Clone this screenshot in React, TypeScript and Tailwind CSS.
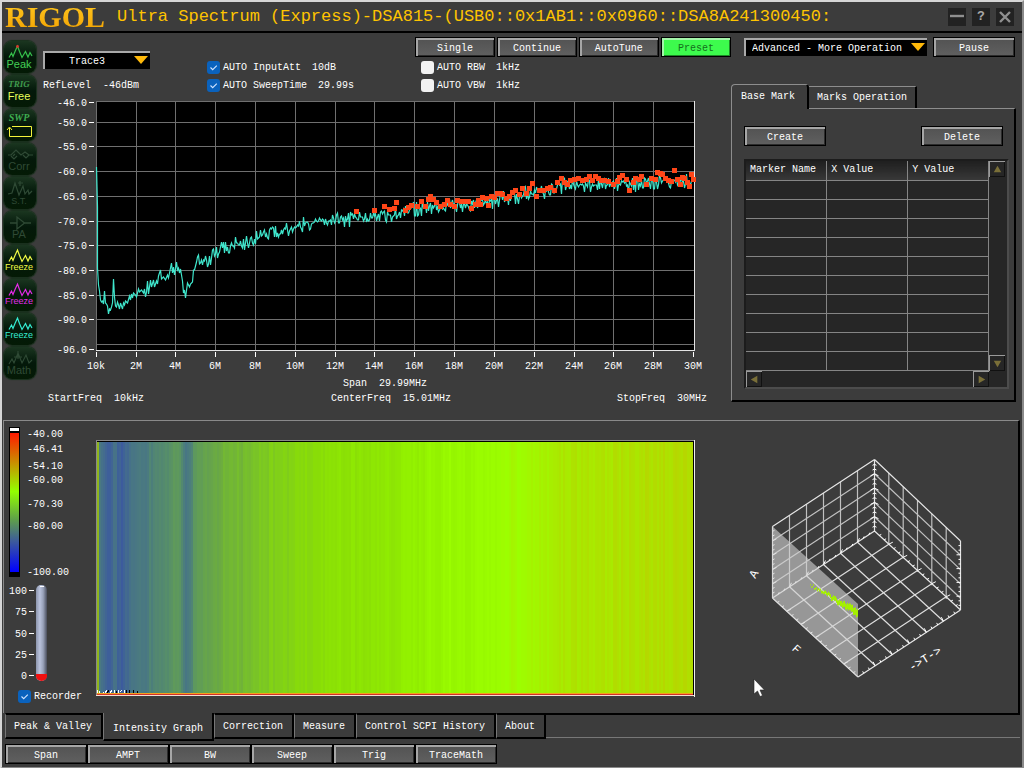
import { useState } from 'react';
import type { ReactNode } from 'react';
import clsx from 'clsx';

type Point = [number, number];

const mono = '"Liberation Mono", monospace';

// low end of the trace, followed by the slow rise up to 30M
const TRACE_START: Point[] = [
  [96, 167], [97, 207], [97, 268], [98, 285], [99, 291], [100, 300], [101, 302], [102, 301], [103, 304], [104, 291],
  [105, 303], [106, 304], [107, 306], [108, 314], [109, 309], [110, 310], [111, 307], [112, 303], [113, 279], [114, 297],
  [115, 306], [116, 307], [117, 302], [118, 305], [119, 309], [120, 303], [122, 309], [123, 303], [124, 305], [125, 301],
  [127, 303], [129, 296], [130, 300], [131, 294], [132, 298], [133, 293], [135, 295], [136, 297], [138, 289], [139, 292],
  [141, 290], [143, 293], [144, 289], [145, 297], [146, 292], [147, 281], [148, 294], [150, 280], [151, 287], [153, 280],
  [154, 287], [156, 281], [157, 284], [158, 276], [160, 270], [161, 279], [163, 277], [165, 280], [167, 275], [168, 278],
  [170, 268], [171, 263], [172, 273], [173, 267], [174, 275], [176, 262], [177, 270], [178, 268], [179, 273], [180, 269],
  [182, 281], [183, 293], [184, 290], [185, 298], [187, 283], [189, 287], [190, 284], [192, 282], [193, 270],
];

const BASELINE: Point[] = [
  [194, 270], [196, 262], [205, 260], [215, 256], [222, 248], [240, 244], [255, 239], [270, 233], [290, 229], [310, 222],
  [340, 219], [374, 218], [400, 212], [430, 206], [460, 205], [480, 203], [500, 199], [520, 196], [550, 190], [565, 185],
  [610, 185], [650, 183], [694, 182],
];

const MARKS: Point[] = [
  [356, 211], [374, 210], [384, 206], [389, 209], [394, 208], [396, 202], [405, 210], [408, 207], [411, 205], [417, 206],
  [421, 201], [425, 206], [428, 199], [430, 196], [433, 199], [436, 202], [440, 206], [444, 204], [447, 200], [450, 204],
  [454, 206], [457, 200], [461, 201], [465, 201], [468, 201], [471, 208], [475, 204], [478, 200], [480, 204], [482, 197],
  [486, 198], [488, 205], [491, 196], [494, 197], [497, 193], [500, 193], [502, 194], [506, 198], [509, 196], [512, 192],
  [515, 190], [519, 194], [522, 188], [526, 193], [529, 188], [532, 183], [536, 196], [539, 190], [543, 190], [547, 188],
  [550, 187], [554, 190], [557, 182], [561, 178], [564, 182], [567, 184], [570, 180], [574, 179], [578, 178], [582, 180],
  [586, 179], [589, 176], [592, 180], [595, 176], [598, 178], [601, 180], [604, 180], [608, 181], [613, 184], [617, 181],
  [619, 177], [622, 175], [626, 179], [629, 190], [633, 182], [635, 178], [639, 179], [641, 176], [646, 184], [651, 178],
  [655, 179], [657, 172], [660, 173], [662, 174], [665, 178], [668, 180], [671, 181], [674, 170], [677, 179], [680, 184],
  [682, 177], [684, 178], [687, 182], [689, 186], [691, 174], [693, 179],
];

const HEAT: [number, number, number, number][] = [
  [176, 184, 212, 0], [182, 172, 228, 0], [190, 164, 244, 0], [198, 156, 255, 0], [208, 146, 240, 0], [220, 138, 222, 6],
  [234, 124, 200, 34], [250, 108, 172, 64], [268, 92, 150, 96], [284, 76, 126, 124], [296, 70, 112, 138], [310, 58, 88, 160],
];

function lerpAt(points: Point[], x: number) {
  const i = points.findIndex((p) => p[0] > x);
  if (i === -1) return points[points.length - 1][1];
  if (i === 0) return points[0][1];
  const [x0, y0] = points[i - 1];
  const [x1, y1] = points[i];
  return y0 + ((y1 - y0) * (x - x0)) / (x1 - x0);
}

function noise(n: number) {
  const v = Math.sin(n * 12.9898) * 43758.5453;
  return (v - Math.floor(v)) * 2 - 1;
}

function heatColor(y: number) {
  const i = HEAT.findIndex((s) => s[0] > y);
  if (i === 0) return `rgb(${HEAT[0].slice(1).join(',')})`;
  if (i === -1) return `rgb(${HEAT[HEAT.length - 1].slice(1).join(',')})`;
  const a = HEAT[i - 1];
  const b = HEAT[i];
  const t = (y - a[0]) / (b[0] - a[0]);
  return `rgb(${[1, 2, 3].map((c) => Math.round(a[c] + (b[c] - a[c]) * t)).join(',')})`;
}

const trace: Point[] = [...TRACE_START];
for (let x = 194; x <= 693; x++) {
  const n = noise(x * 7 + 3);
  trace.push([x, Math.round(lerpAt(BASELINE, x) + n * (2 + Math.abs(n) * 6))]);
}

const columns = Array.from({ length: 298 }, (_, i) => {
  const x = 97 + i * 2;
  if (i === 0) return { x, fill: '#8fb41c' };
  const avg = (lerpAt(trace, x - 2) + lerpAt(trace, x) + lerpAt(trace, x + 1) + lerpAt(trace, x + 3)) / 4;
  const base = x < 194 ? avg : lerpAt(BASELINE, x) * 0.5 + avg * 0.5;
  return { x, fill: heatColor(base - 2 + noise(i * 3) * 3) };
});

const Y_TICKS: [number, string][] = [
  [102, '-46.0'], [122, '-50.0'], [146, '-55.0'], [171, '-60.0'], [196, '-65.0'], [221, '-70.0'], [245, '-75.0'],
  [270, '-80.0'], [295, '-85.0'], [319, '-90.0'], [349, '-96.0'],
];
const X_TICKS: [number, string][] = [
  [96, '10k'], [136, '2M'], [175, '4M'], [215, '6M'], [255, '8M'], [295, '10M'], [335, '12M'], [374, '14M'],
  [414, '16M'], [454, '18M'], [494, '20M'], [534, '22M'], [574, '24M'], [613, '26M'], [653, '28M'], [693, '30M'],
];

const bevel =
  'h-5 border border-black bg-linear-to-b from-[#525252] to-[#606060] pt-1 text-center leading-3 shadow-[inset_2px_2px_0_#a6a6a6,inset_-1px_-1px_0_#2c2c2c]';

function PanelButton({ children, className }: { children: ReactNode; className?: string }) {
  return (
    <button type="button" className={clsx(bevel, className)}>
      {children}
    </button>
  );
}

function ComboBox({ label, value, className }: { label: string; value: string; className: string }) {
  return (
    <div className="relative">
      <select
        aria-label={label}
        className={clsx('block h-[18px] w-full appearance-none border-t-2 border-l-2 border-[#a9a9a9] bg-black pt-px text-white', className)}
      >
        <option>{value}</option>
      </select>
      <svg viewBox="0 0 14 8" className="pointer-events-none absolute top-[5px] right-[2px] h-2 w-3.5">
        <path d="M0 0H14L7 8Z" fill="#ffb90a" />
      </svg>
    </div>
  );
}

function CheckBox({ label, value, defaultChecked }: { label: string; value?: string; defaultChecked?: boolean }) {
  return (
    <label className="flex h-[18px] items-center gap-[3px]">
      <span className="relative flex">
        <input
          type="checkbox"
          defaultChecked={defaultChecked}
          className="peer size-[13px] appearance-none rounded-[3px] bg-[#f2f2f2] checked:bg-[#0a62bd]"
        />
        <svg viewBox="0 0 13 13" className="pointer-events-none absolute inset-0 hidden size-[13px] peer-checked:block">
          <path d="M3.5 6.5L5.7 8.7L9.8 4.6" fill="none" stroke="#cfe3ff" strokeWidth="1.1" />
        </svg>
      </span>
      <span className="pt-0.5">{label}</span>
      {value && <span className="ml-2 pt-0.5">{value}</span>}
    </label>
  );
}

function MiniTrace({ color }: { color: string }) {
  return (
    <path
      d="M5 16.5L7.5 12L9 15.5L11 10.5L13.5 5L15.5 10.5L18 16.5L21.5 10.5L24 16L26 11.5L28 15"
      fill="none"
      stroke={color}
      strokeWidth="1.2"
    />
  );
}

function IconText({ color, size = 11, y = 27, children }: { color: string; size?: number; y?: number; children: string }) {
  return (
    <text x="15" y={y} textAnchor="middle" fontSize={size} fontFamily='"Liberation Sans", sans-serif' fill={color}>
      {children}
    </text>
  );
}

const DIM = '#2f4a35';

function Freeze({ color }: { color: string }) {
  return (
    <>
      <MiniTrace color={color} />
      <IconText color={color} size={9} y={25}>Freeze</IconText>
    </>
  );
}

const TOOLS: { name: string; icon: ReactNode }[] = [
  {
    name: 'Peak',
    icon: (
      <>
        <MiniTrace color="#36c04c" />
        <circle cx="13.5" cy="5.5" r="1.4" fill="#d8382c" />
        <IconText color="#43cf55">Peak</IconText>
      </>
    ),
  },
  {
    name: 'Trigger',
    icon: (
      <>
        <text x="15" y="12" textAnchor="middle" fontSize="9" fontStyle="italic" fontWeight="bold" fontFamily='"Liberation Serif", serif' fill="#3f9a4c">
          TRIG
        </text>
        <IconText color="#eaff5a" y={25}>Free</IconText>
      </>
    ),
  },
  {
    name: 'Sweep mode',
    icon: (
      <>
        <text x="15" y="12" textAnchor="middle" fontSize="10" fontStyle="italic" fontWeight="bold" fontFamily='"Liberation Serif", serif' fill="#3fae50">
          SWP
        </text>
        <path d="M8 17.5H27.5V27.5H5.5V19M3 21L5.5 18L8 21" fill="none" stroke="#f4f43a" />
      </>
    ),
  },
  {
    name: 'Correction',
    icon: (
      <>
        <path d="M4 12H7L12 7L17 12L21 9L25 12H29M9 13L11 11M7 13L10 16L13 13M19 12L22 15L25 12" fill="none" stroke={DIM} strokeWidth="1.2" />
        <IconText color={DIM}>Corr</IconText>
      </>
    ),
  },
  {
    name: 'Signal tracking',
    icon: (
      <>
        <path d="M4 17L8 16L11 6L15 18L19 9L21 17L24 13L25 17L28 14M16 4V9M14 6H19" fill="none" stroke={DIM} strokeWidth="1.2" />
        <IconText color={DIM} size={9}>S.T.</IconText>
      </>
    ),
  },
  {
    name: 'Preamplifier',
    icon: (
      <>
        <path d="M6 12H13M20 12H27M13 6V18L20 12.5V11.5Z" fill="none" stroke={DIM} strokeWidth="1.3" />
        <IconText color={DIM}>PA</IconText>
      </>
    ),
  },
  { name: 'Freeze trace 1', icon: <Freeze color="#f1fb46" /> },
  { name: 'Freeze trace 2', icon: <Freeze color="#e32be6" /> },
  { name: 'Freeze trace 3', icon: <Freeze color="#35ecd2" /> },
  {
    name: 'Math',
    icon: (
      <>
        <path d="M5 17L8 12L10 16L14 6L18 16L22 8L25 16L28 13M10 10H18M14 4V12" fill="none" stroke={DIM} strokeWidth="1.1" />
        <IconText color={DIM}>Math</IconText>
      </>
    ),
  },
];

function SideBar() {
  return (
    <nav className="flex w-[41px] shrink-0 flex-col gap-0.5 pt-2 pl-0.5">
      {TOOLS.map((tool) => (
        <button
          key={tool.name}
          type="button"
          aria-label={tool.name}
          className="size-8 rounded-lg bg-linear-to-b from-[#1b3620] via-[#04180a] to-[#041a05] shadow-[0_0_1px_1px_#17301b]"
        >
          <svg viewBox="0 0 32 32" className="block size-8">{tool.icon}</svg>
        </button>
      ))}
    </nav>
  );
}

function SpectrumChart() {
  return (
    <svg viewBox="43 97 688 278" className="block w-full" role="img" aria-label="Spectrum" shapeRendering="crispEdges">
      <rect x="96" y="101" width="598" height="249" fill="#000" />
      <g stroke="#6f6f6f">
        {Y_TICKS.slice(1, -1).map(([y]) => (
          <path key={y} d={`M96 ${y}.5H694`} />
        ))}
        <path d="M96 344.5H694M96 101.5H694M96.5 101V350" />
        {X_TICKS.slice(1, -1).map(([x]) => (
          <path key={x} d={`M${x}.5 101V350`} />
        ))}
      </g>
      <path d="M96 350.5H694.5V101" fill="none" stroke="#e4e4e4" />
      <polyline points={trace.map(([x, y]) => `${x}.5,${y}`).join(' ')} fill="none" stroke="#3fe6cc" strokeWidth="1.2" shapeRendering="auto" />
      {MARKS.map(([x, y]) => (
        <rect key={x} x={x - 2} y={y - 2} width="5" height="5" fill="#ff4618" />
      ))}
      <g fontSize="10" fontFamily={mono} fill="#fff">
        {Y_TICKS.map(([y, label]) => (
          <g key={label}>
            <path d={`M89 ${y}.5H94`} stroke="#fff" />
            <text x="87" y={y + 4} textAnchor="end">{label}</text>
          </g>
        ))}
        {X_TICKS.map(([x, label]) => (
          <g key={label}>
            <path d={`M${x}.5 352V357`} stroke="#fff" />
            <text x={x} y="369" textAnchor="middle">{label}</text>
          </g>
        ))}
      </g>
    </svg>
  );
}

function TracePanel() {
  return (
    <section className="min-w-0 flex-1">
      <div className="grid grid-cols-[164px_208px_1fr] pt-1">
        <div className="w-[107px] pt-3.5">
          <ComboBox label="Trace" value="Trace3" className="pl-6" />
          <p className="mt-[11px] flex gap-3 whitespace-nowrap">
            <span>RefLevel</span>
            <span>-46dBm</span>
          </p>
        </div>
        <div className="pt-[21px]">
          <CheckBox label="AUTO InputAtt" value="10dB" defaultChecked />
          <CheckBox label="AUTO SweepTime" value="29.99s" defaultChecked />
        </div>
        <div>
          <div className="flex gap-0.5">
            <PanelButton className="flex-8">Single</PanelButton>
            <PanelButton className="flex-8">Continue</PanelButton>
            <PanelButton className="flex-8">AutoTune</PanelButton>
            <button type="button" className="h-5 flex-7 border border-black bg-[#3dfb4d] pt-1 leading-3 text-[#14701c] shadow-[inset_2px_2px_0_#a4f5aa,inset_-1px_-1px_0_#1c8a26]">
              Preset
            </button>
          </div>
          <div className="pt-px pl-1.5">
            <CheckBox label="AUTO RBW" value="1kHz" />
            <CheckBox label="AUTO VBW" value="1kHz" />
          </div>
        </div>
      </div>
      <div className="mt-[3px]">
        <SpectrumChart />
      </div>
      <div className="mt-[3px] mr-6 ml-[5px] grid grid-cols-[283px_1fr_auto] gap-y-[3px]">
        <p className="col-start-2 flex gap-3 pl-3"><span>Span</span><span>29.99MHz</span></p>
        <p className="col-start-1 flex gap-3"><span>StartFreq</span><span>10kHz</span></p>
        <p className="flex gap-3"><span>CenterFreq</span><span>15.01MHz</span></p>
        <p className="flex gap-3"><span>StopFreq</span><span>30MHz</span></p>
      </div>
    </section>
  );
}

const ARROWS = { up: 'M4 11L8 4L12 11Z', down: 'M4 5L8 12L12 5Z', left: 'M11 4L4 8L11 12Z', right: 'M5 4L12 8L5 12Z' };

function ScrollButton({ dir }: { dir: keyof typeof ARROWS }) {
  return (
    <button type="button" aria-label={`Scroll ${dir}`} className="size-4 border-t border-l border-[#9a9a9a] bg-[#262626] shadow-[inset_-1px_-1px_0_#111]">
      <svg viewBox="0 0 16 16" className="block size-[15px]">
        <path d={ARROWS[dir]} fill="#7a6f38" />
      </svg>
    </button>
  );
}

function MarkerPanel() {
  const [tab, setTab] = useState('base');
  return (
    <aside className="w-[285px] shrink-0 pt-1">
      <div className="flex justify-between pl-[13px]">
        <div className="w-[183px] pt-px">
          <ComboBox label="Operation" value="Advanced - More Operation" className="pl-1.5" />
        </div>
        <PanelButton className="mr-px w-[82px]">Pause</PanelButton>
      </div>
      <div role="tablist" className="mt-[27px] flex items-end">
        <button
          type="button"
          role="tab"
          aria-selected={tab === 'base'}
          onClick={() => setTab('base')}
          className="z-10 -mb-px h-[25px] rounded-t-sm border-t border-r-2 border-l border-t-[#8d8d8d] border-r-black border-l-[#8d8d8d] bg-[#3c3c3c] pr-3 pl-[9px]"
        >
          Base Mark
        </button>
        <button
          type="button"
          role="tab"
          aria-selected={tab === 'op'}
          onClick={() => setTab('op')}
          className="h-[22px] border-t border-r-2 border-t-[#8d8d8d] border-r-black px-2"
        >
          Marks Operation
        </button>
      </div>
      <div className="border-t border-r-2 border-b-2 border-l border-t-[#8d8d8d] border-r-black border-b-black border-l-[#8d8d8d] pt-[17px] pr-[5px] pb-[11px] pl-3">
        <div className="flex justify-between pr-1.5">
          <PanelButton className="w-[82px]">Create</PanelButton>
          <PanelButton className="w-[82px]">Delete</PanelButton>
        </div>
        <div className="mt-[13px] grid grid-cols-[1fr_18px] border-2 border-t-[#1c1c1c] border-r-[#4c4c4c] border-b-[#4c4c4c] border-l-[#1c1c1c] bg-[#262626]">
          <table className="w-full table-fixed border-collapse">
            <thead>
              <tr className="h-[19px] text-left">
                {['Marker Name', 'X Value', 'Y Value'].map((head) => (
                  <th key={head} className="border-r border-b border-[#858585] bg-linear-to-b from-[#1f1f1f] to-[#383838] pl-1 font-normal whitespace-nowrap">
                    {head}
                  </th>
                ))}
              </tr>
            </thead>
            <tbody>
              {Array.from({ length: 10 }, (_, row) => (
                <tr key={row} className="h-[19px]">
                  <td className="border-r border-b border-[#858585]" />
                  <td className="border-r border-b border-[#858585]" />
                  <td className="border-r border-b border-[#858585]" />
                </tr>
              ))}
            </tbody>
          </table>
          <div className="flex flex-col justify-between">
            <ScrollButton dir="up" />
            <ScrollButton dir="down" />
          </div>
          <div className="flex h-4 justify-between">
            <ScrollButton dir="left" />
            <ScrollButton dir="right" />
          </div>
        </div>
      </div>
    </aside>
  );
}

function LevelScale() {
  const levels: [number, string][] = [
    [434, '-40.00'], [449, '-46.41'], [466, '-54.10'], [480, '-60.00'], [504, '-70.30'], [526, '-80.00'], [572, '-100.00'],
  ];
  const tank: [number, string][] = [[591, '100'], [612, '75'], [634, '50'], [655, '25'], [676, '0']];
  return (
    <svg viewBox="4 421 92 266" className="block w-full" role="img" aria-label="Level scale">
      <defs>
        <linearGradient id="level" x1="0" y1="0" x2="0" y2="1">
          <stop offset="0" stopColor="#ff1a00" />
          <stop offset="0.42" stopColor="#93ff00" />
          <stop offset="0.62" stopColor="#5fa048" />
          <stop offset="0.78" stopColor="#3c5a9c" />
          <stop offset="1" stopColor="#0000ff" />
        </linearGradient>
        <linearGradient id="glass">
          <stop offset="0" stopColor="#8d96ae" />
          <stop offset="0.35" stopColor="#b9c2dc" />
          <stop offset="0.65" stopColor="#99a2ba" />
          <stop offset="1" stopColor="#4a4e5c" />
        </linearGradient>
      </defs>
      <rect x="9" y="427" width="11" height="150" fill="#000" />
      <rect x="10" y="428" width="9" height="3" fill="#fff" />
      <rect x="10" y="433" width="9" height="139" fill="url(#level)" />
      <rect x="36" y="585" width="11" height="96" rx="5" fill="url(#glass)" />
      <path d="M36 674H47V676A5.5 5 0 0 1 36 676Z" fill="#f01010" />
      <path d="M40 586.5H44" stroke="#fff" />
      <g fontSize="10" fontFamily={mono} fill="#fff">
        {levels.map(([y, label]) => (
          <text key={label} x="27" y={y + 3}>{label}</text>
        ))}
        {tank.map(([y, label]) => (
          <g key={label}>
            <text x="27" y={y + 3} textAnchor="end">{label}</text>
            <path d={`M29 ${y - 1}.5H34`} stroke="#fff" />
          </g>
        ))}
      </g>
    </svg>
  );
}

function IntensityGraph() {
  return (
    <svg viewBox="96 440 600 258" className="block w-full" role="img" aria-label="Intensity graph" shapeRendering="crispEdges">
      <rect x="96" y="440" width="598" height="256" fill="#000" />
      {columns.map((col) => (
        <rect key={col.x} x={col.x} y="442" width="2" height="252" fill={col.fill} />
      ))}
      <path d="M96 440.5H694M96.5 440V696" stroke="#8a8a8a" fill="none" />
      <path d="M694.5 440V697" stroke="#f0f0f0" />
      <path d="M97 693.5H693" stroke="#f6a01c" />
      <path d="M97 694.5H693" stroke="#d4322a" />
      <path d="M96 695.5H694" stroke="#f3dfd0" />
      <path d="M97 693V690M99 691V693M103 693V692M105 693L107 690M110 693L112 690M114 690V693M118 690V693M120 692L122 690M124 690V693" stroke="#fff" />
      <path d="M107 693L109 690M116 693V691M126 690L127 693M129 690V693M133 690V693M137 691V693" stroke="#000" />
    </svg>
  );
}

const mix = (a: Point, b: Point, t: number): Point => [a[0] + (b[0] - a[0]) * t, a[1] + (b[1] - a[1]) * t];
const seg = (a: Point, b: Point) => `M${a[0].toFixed(1)} ${a[1].toFixed(1)}L${b[0].toFixed(1)} ${b[1].toFixed(1)}`;

// a: shared corner, b and c: ends of the two edges that leave it
function wallLines(a: Point, b: Point, c: Point, nb: number, nc: number) {
  const d: Point = [b[0] + c[0] - a[0], b[1] + c[1] - a[1]];
  const lines: string[] = [];
  for (let i = 1; i < nb; i++) lines.push(seg(mix(a, b, i / nb), mix(c, d, i / nb)));
  for (let i = 1; i < nc; i++) lines.push(seg(mix(a, c, i / nc), mix(b, d, i / nc)));
  return lines.join('');
}

function edgeTicks(a: Point, b: Point, dx: number, dy: number, count = 18) {
  return Array.from({ length: count - 1 }, (_, i) => {
    const p = mix(a, b, (i + 1) / count);
    const k = i % 3 === 2 ? 2 : 1;
    return seg(p, [p[0] + dx * k, p[1] + dy * k]);
  }).join('');
}

function Waterfall() {
  const top: Point = [874.5, 459.5];
  const back: Point = [874.5, 531];
  const leftTop: Point = [772.5, 526.5];
  const left: Point = [772.5, 598];
  const rightTop: Point = [960.5, 541];
  const right: Point = [960.5, 610];
  const front: Point = [858, 677];
  const ridge = Array.from({ length: 48 }, (_, i) => {
    const x = 810 + i;
    const y = 584 + i * 0.53 + noise(i + 9) * 2;
    return `M${x}.5 ${y.toFixed(1)}v${(1 + i / 7).toFixed(1)}`;
  });
  return (
    <svg viewBox="696 422 322 290" className="block w-full" role="img" aria-label="Waterfall">
      <g strokeWidth="1.2" fill="none">
        <path d={wallLines(top, leftTop, back, 6, 5)} stroke="#c0c0c0" />
        <path d={wallLines(top, rightTop, back, 6, 5)} stroke="#c0c0c0" />
        <path d={wallLines(back, left, right, 6, 6)} stroke="#dedede" />
        <path
          d={[
            seg(top, leftTop), seg(top, rightTop), seg(top, back), seg(back, left), seg(back, right),
            seg(rightTop, right), seg(right, front), seg(left, front), seg(leftTop, left),
          ].join('')}
          stroke="#e6e6e6"
        />
      </g>
      <path
        d={[
          edgeTicks(top, back, 2, 1, 15), edgeTicks(top, back, -2, 1, 15), edgeTicks(back, left, 1, -2), edgeTicks(back, right, 2, -1),
          edgeTicks(rightTop, right, -2, 0, 15), edgeTicks(front, right, -1, -2), edgeTicks(left, front, 2, -1), edgeTicks(leftTop, left, 2, -1, 15),
        ].join('')}
        stroke="#fff"
        fill="none"
      />
      <path d="M772 526L858 604V677L772 598Z" fill="#d0d0d0" fillOpacity="0.62" />
      <path d={ridge.join('')} stroke="#a4f000" />
      <g fontSize="12" fontFamily={mono} fill="#fff" textAnchor="middle">
        <text transform="translate(757 576) rotate(-60)">A</text>
        <text transform="translate(794 652) rotate(42)">F</text>
        <text transform="translate(927 662) rotate(-32)">-&gt;T-&gt;</text>
      </g>
      <path d="M754 679V694L757.5 691L760 696.5L762.5 695.5L760 690H764.5Z" fill="#fff" stroke="#222" strokeWidth="0.6" />
    </svg>
  );
}

function IntensityPanel() {
  return (
    <section className="mr-0.5 ml-px flex border-t border-r-2 border-l border-t-[#8a8a8a] border-r-black border-l-[#8a8a8a]">
      <div className="w-[92px] shrink-0 pb-2">
        <LevelScale />
        <div className="pl-3.5">
          <CheckBox label="Recorder" defaultChecked />
        </div>
      </div>
      <div className="min-w-0 flex-1 pt-[19px]">
        <IntensityGraph />
      </div>
      <div className="w-[322px] shrink-0 pt-px">
        <Waterfall />
      </div>
    </section>
  );
}

const TABS = ['Peak & Valley', 'Intensity Graph', 'Correction', 'Measure', 'Control SCPI History', 'About'];

function BottomTabs() {
  const [active, setActive] = useState('Intensity Graph');
  return (
    <div role="tablist" className="mr-0.5 flex h-7 items-start pl-[3px]">
      {TABS.map((tab) => (
        <button
          key={tab}
          type="button"
          role="tab"
          aria-selected={active === tab}
          onClick={() => setActive(tab)}
          className={clsx(
            'border-r-2 border-b-2 border-l border-r-black border-b-black border-l-[#777] whitespace-nowrap',
            active === tab ? 'h-7 px-[9px] pt-1.5' : 'h-[26px] border-t-2 border-t-black pt-0.5 pr-[9px] pl-2',
          )}
        >
          {tab}
        </button>
      ))}
      <div className="h-[25px] flex-1 border-t-2 border-b border-t-black border-b-[#777]" />
    </div>
  );
}

export default function App() {
  return (
    <div className="flex min-h-screen w-full flex-col border-2 border-t-[#d6d6d6] border-r-[#8a8a8a] border-b-[#8a8a8a] border-l-[#d6d6d6] bg-[#3c3c3c] font-['Liberation_Mono',monospace] text-[10px] leading-3 text-white">
      <header className="flex h-[31px] items-center border-b-2 border-black pr-2 pl-[3px]">
        <span className="bg-linear-to-b from-[#ffc81e] to-[#f2a200] bg-clip-text font-['Liberation_Serif',serif] text-[30px] leading-[30px] font-bold text-transparent">
          RIGOL
        </span>
        <h1 className="ml-3 flex-1 text-[17px] leading-6 whitespace-nowrap text-[#ffc400]">
          Ultra Spectrum (Express)-DSA815-(USB0::0x1AB1::0x0960::DSA8A241300450:
        </h1>
        <div className="flex gap-1.5">
          {[
            { name: 'Minimize', d: 'M2 8H16' },
            { name: 'Help', d: '' },
            { name: 'Close', d: 'M4 4L14 14M14 4L4 14' },
          ].map((item) => (
            <button key={item.name} type="button" aria-label={item.name} className="size-[18px] bg-[#222] text-[13px] leading-[18px] font-bold text-[#a8a8a8]">
              {item.d ? (
                <svg viewBox="0 0 18 18" className="block size-[18px]">
                  <path d={item.d} stroke="#8f8f8f" strokeWidth="2.4" />
                </svg>
              ) : (
                '?'
              )}
            </button>
          ))}
        </div>
      </header>
      <main className="flex-1">
        <div className="flex pr-1.5 pb-[15px]">
          <SideBar />
          <TracePanel />
          <MarkerPanel />
        </div>
        <IntensityPanel />
        <BottomTabs />
        <div className="flex py-[3px] pl-[3px]">
          {['Span', 'AMPT', 'BW', 'Sweep', 'Trig', 'TraceMath'].map((name) => (
            <PanelButton key={name} className="w-[82px]">{name}</PanelButton>
          ))}
        </div>
      </main>
    </div>
  );
}
